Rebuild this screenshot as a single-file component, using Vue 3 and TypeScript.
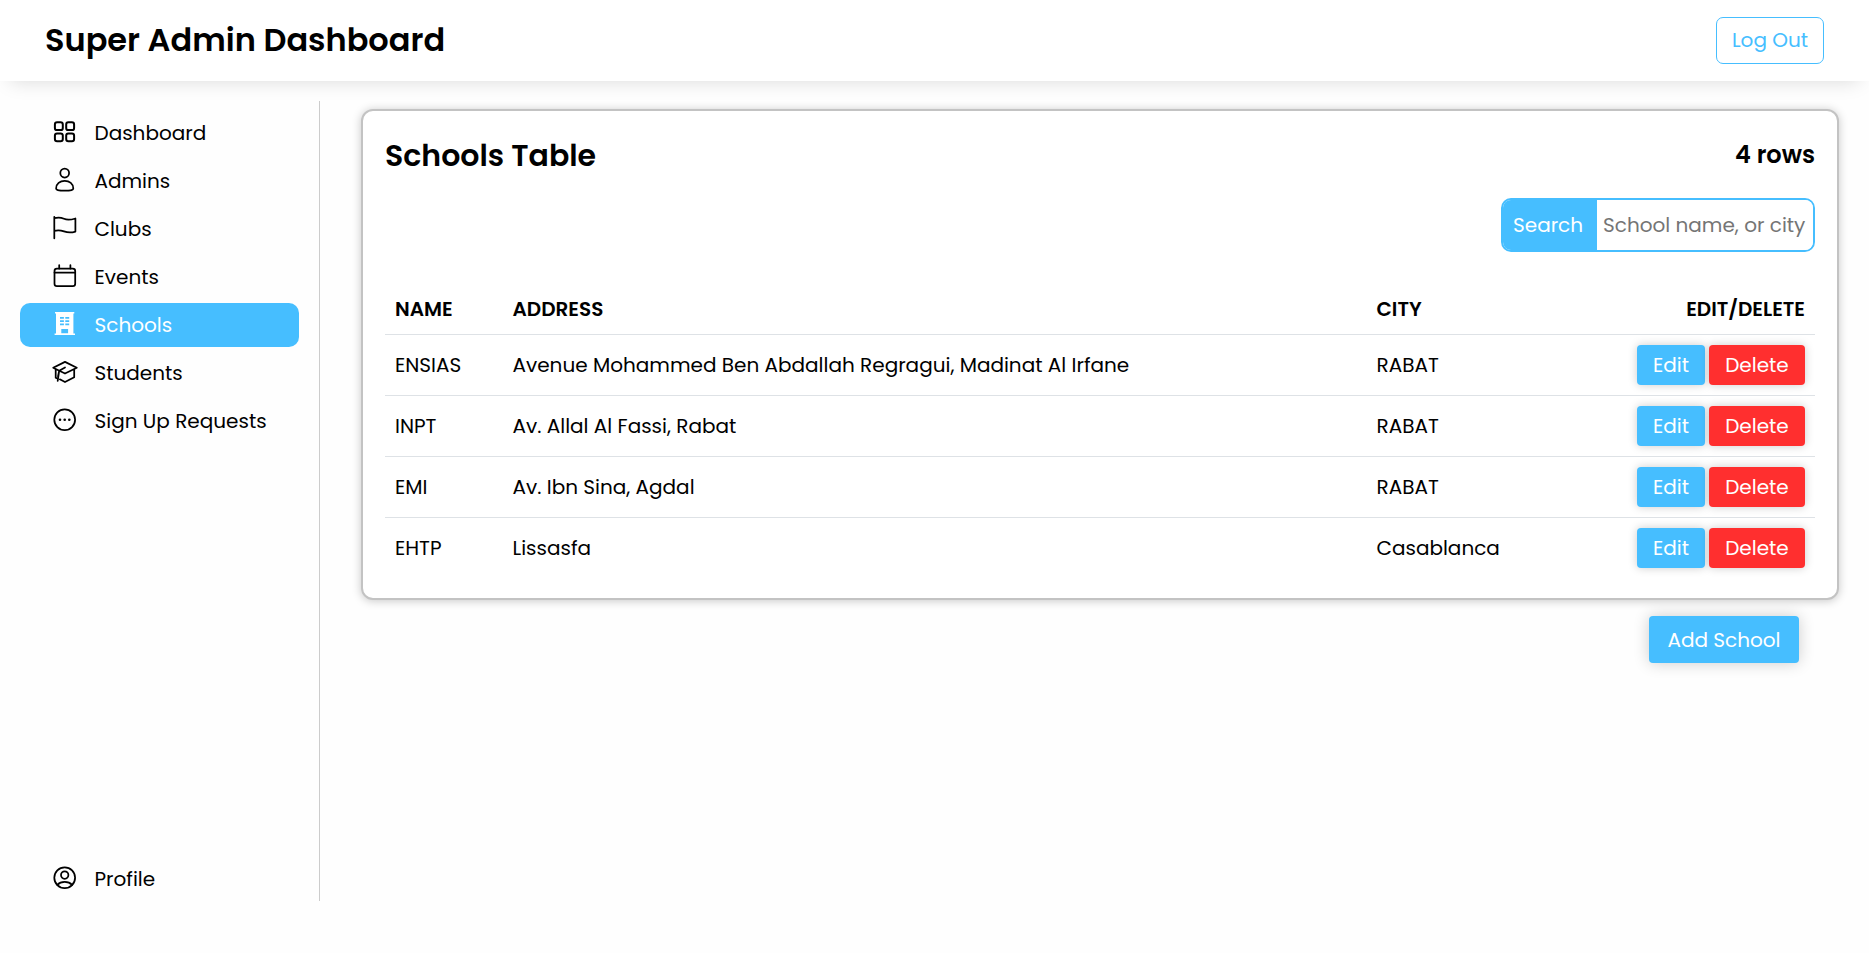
<script setup lang="ts">
import { ref } from 'vue'

interface NavItem {
  label: string
  icon: string
}

interface School {
  name: string
  address: string
  city: string
}

const navItems: NavItem[] = [
  { label: 'Dashboard', icon: 'grid' },
  { label: 'Admins', icon: 'person' },
  { label: 'Clubs', icon: 'flag' },
  { label: 'Events', icon: 'calendar' },
  { label: 'Schools', icon: 'building' },
  { label: 'Students', icon: 'cap' },
  { label: 'Sign Up Requests', icon: 'dots' },
  { label: 'Profile', icon: 'profile' },
]

const active = ref('Schools')
const query = ref('')

const schools: School[] = [
  { name: 'ENSIAS', address: 'Avenue Mohammed Ben Abdallah Regragui, Madinat Al Irfane', city: 'RABAT' },
  { name: 'INPT', address: 'Av. Allal Al Fassi, Rabat', city: 'RABAT' },
  { name: 'EMI', address: 'Av. Ibn Sina, Agdal', city: 'RABAT' },
  { name: 'EHTP', address: 'Lissasfa', city: 'Casablanca' },
]
</script>

<template>
  <div class="page">
    <header class="topbar">
      <h1>Super Admin Dashboard</h1>
      <button class="logout" type="button">Log Out</button>
    </header>

    <div class="body">
      <nav class="sidebar">
        <a
          v-for="item in navItems"
          :key="item.label"
          class="nav-item"
          :class="{ active: item.label === active, last: item.icon === 'profile' }"
          @click="active = item.label"
        >
          <svg class="icon" width="24" height="24" viewBox="0 0 24 24" aria-hidden="true">
            <g v-if="item.icon === 'grid'" class="bold">
              <rect x="1.9" y="2.2" width="7.9" height="7.9" rx="2.2" />
              <rect x="13.2" y="2.2" width="7.9" height="7.9" rx="2.2" />
              <rect x="1.9" y="13.4" width="7.900" height="7.900" rx="2.200" />
              <rect x="13.2" y="13.4" width="7.900" height="7.900" rx="2.200" />
            </g>
            <g v-else-if="item.icon === 'person'">
              <circle cx="11.7" cy="5.1" r="4.4" />
              <path d="M3.1 20.4C3.1 16 6.9 12.8 11.7 12.8s8.6 3.2 8.6 7.6c0 1.9-4.2 2.3-8.6 2.3s-8.6-.4-8.6-2.3z" />
            </g>
            <g v-else-if="item.icon === 'flag'">
              <path d="M1.3.8v21.5M1.3 2.2C5 1 8.3 1.5 11 2.8S17.5 4 22.4 2.5V15.6C18 17 14.5 16.7 11 15.4S5 13.7 1.3 14.9" />
            </g>
            <g v-else-if="item.icon === 'calendar'">
              <rect x="1.5" y="4.6" width="20.7" height="17.6" rx="2.4" />
              <path d="M1.5 8.6h20.7M6.2 1.2v3.4M17.4 1.2v3.4" />
            </g>
            <path
              v-else-if="item.icon === 'building'"
              class="solid"
              fill-rule="evenodd"
              d="M2 0h19.3v1.6h-.9v19.8H22V23H1.6v-1.6H3V1.6H2zM7 5v1.800h3.900V5zM12.300 5v1.800h3.900V5zM7 8.200v1.800h3.900V8.200zM12.300 8.200v1.800h3.900V8.200zM7 11.400v1.800h3.900v-1.800zM12.300 11.400v1.800h3.900v-1.800zM8.300 17v4.200h6.800V17z"
            />
            <g v-else-if="item.icon === 'cap'">
              <path d="M12 1.9L.2 7.7L12 13.5L23.8 7.7zM2.7 9.5v8.2l2 .9M21.2 9.5v7.8L12 22L6.8 19.3M12 7.5L6.2 10.7L4.7 20.8M6.2 10.7L5 16.5" />
            </g>
            <g v-else-if="item.icon === 'dots'">
              <circle cx="11.7" cy="11.7" r="10.4" />
              <circle class="solid" cx="7" cy="11.7" r="1.3" />
              <circle class="solid" cx="11.7" cy="11.7" r="1.3" />
              <circle class="solid" cx="16.3" cy="11.7" r="1.3" />
            </g>
            <g v-else>
              <circle cx="11.7" cy="11.7" r="10.4" />
              <circle cx="11.7" cy="9.1" r="3.7" />
              <path d="M4.3 18.9c1.8-2 4.2-3 7.4-3s5.6 1 7.4 3" />
            </g>
          </svg>
          <span>{{ item.label }}</span>
        </a>
      </nav>

      <main class="content">
        <section class="card">
          <div class="card-head">
            <h2>Schools Table</h2>
            <strong class="count">{{ schools.length }} rows</strong>
          </div>

          <div class="search">
            <label for="school-search">Search</label>
            <input id="school-search" v-model="query" type="text" placeholder="School name, or city" />
          </div>

          <table>
            <thead>
              <tr>
                <th class="col-name">NAME</th>
                <th class="col-address">ADDRESS</th>
                <th class="col-city">CITY</th>
                <th class="col-actions">EDIT/DELETE</th>
              </tr>
            </thead>
            <tbody>
              <tr v-for="school in schools" :key="school.name">
                <td>{{ school.name }}</td>
                <td>{{ school.address }}</td>
                <td>{{ school.city }}</td>
                <td>
                  <div class="actions">
                    <button class="btn edit" type="button">Edit</button>
                    <button class="btn delete" type="button">Delete</button>
                  </div>
                </td>
              </tr>
            </tbody>
          </table>
        </section>

        <button class="btn add" type="button">Add School</button>
      </main>
    </div>
  </div>
</template>

<style>
body {
  background: #fefefe;
}
</style>

<style scoped>
.page {
  --blue: #46beff;
  height: 953px;
  box-sizing: border-box;
  font-family: Poppins, Inter, 'Open Sans', sans-serif;
  font-size: 20px;
  font-weight: 400;
  line-height: 24px;
  color: #000;
}

.page * {
  box-sizing: border-box;
}

button,
input {
  font: inherit;
}

.topbar {
  display: flex;
  align-items: center;
  justify-content: space-between;
  height: 81px;
  padding: 0 45px;
  background: #fff;
  box-shadow: 0 10px 20px -10px rgba(0, 0, 0, 0.15);
}

h1 {
  margin: 0 0 1px;
  font-size: 32px;
  font-weight: 600;
}

.logout {
  width: 108px;
  height: 47px;
  padding: 0 0 2px;
  border: 1px solid var(--blue);
  border-radius: 7px;
  background: #fff;
  color: var(--blue);
}

.body {
  display: flex;
  align-items: flex-start;
  padding-top: 20px;
}

.sidebar {
  display: flex;
  flex-direction: column;
  gap: 4px;
  flex: none;
  width: 320px;
  height: 800px;
  padding: 10px 20px 0;
  border-right: 1px solid #ccc;
}

.nav-item {
  display: flex;
  align-items: center;
  gap: 17.5px;
  height: 44px;
  padding-left: 33px;
  border-radius: 10px;
  white-space: nowrap;
  cursor: pointer;
}

.nav-item.active {
  background: var(--blue);
  color: #fff;
}

.nav-item.last {
  margin-top: auto;
}

.icon {
  flex: none;
  margin-bottom: 2px;
  overflow: visible;
  fill: none;
  stroke: currentColor;
  stroke-width: 1.75;
  stroke-linejoin: round;
  stroke-linecap: round;
}

.bold {
  stroke-width: 2;
}

.solid {
  fill: currentColor;
  stroke: none;
}

.content {
  display: flex;
  flex-direction: column;
  flex: 1;
  padding: 8px 30px 0 41px;
}

.card {
  height: 491px;
  padding: 14px 22px 20px;
  border: 2px solid #c3c3c3;
  border-radius: 12px;
  background: #fff;
  box-shadow: 0 1px 10px rgba(0, 0, 0, 0.22);
}

.card-head {
  display: flex;
  align-items: center;
  justify-content: space-between;
  height: 60px;
}

h2 {
  margin: 2px 0 0;
  font-size: 30px;
  font-weight: 600;
}

.count {
  font-size: 24px;
  font-weight: 600;
}

.search {
  display: flex;
  width: 314px;
  height: 54px;
  margin: 13px 0 32px auto;
  border: 2px solid var(--blue);
  border-radius: 10px;
  overflow: hidden;
}

.search label {
  display: flex;
  align-items: center;
  flex: none;
  width: 94px;
  padding-left: 10px;
  background: var(--blue);
  color: #fff;
}

.search input {
  flex: 1;
  min-width: 0;
  padding: 0 0 0 6px;
  border: 0;
  outline: 0;
  background: #fff;
}

.search input::placeholder {
  color: #757575;
  opacity: 1;
}

table {
  width: 100%;
  border-spacing: 0;
  table-layout: fixed;
}

th,
td {
  height: 61px;
  padding: 0 10px;
  border-bottom: 1px solid #dee2e6;
  text-align: left;
  vertical-align: middle;
  white-space: nowrap;
}

th {
  height: 51px;
  font-weight: 600;
}

tbody tr:last-child td {
  height: 60px;
  border-bottom: 0;
}

.col-name {
  width: 117.5px;
}

.col-address {
  width: 864px;
}

.col-city {
  width: 200px;
}

.col-actions {
  text-align: right;
}

.actions {
  display: flex;
  justify-content: flex-end;
  gap: 4px;
}

.btn {
  height: 40px;
  padding: 0;
  border: 0;
  border-radius: 4px;
  color: #fff;
  box-shadow: 0 0 10px rgba(0, 0, 0, 0.2);
}

.edit {
  width: 68px;
  background: var(--blue);
}

.delete {
  width: 96px;
  background: #ff2f2f;
}

.add {
  align-self: flex-end;
  width: 150px;
  height: 47px;
  margin: 16px 40px 0 0;
  background: var(--blue);
  box-shadow: 0 0 16px rgba(0, 0, 0, 0.2);
}
</style>
